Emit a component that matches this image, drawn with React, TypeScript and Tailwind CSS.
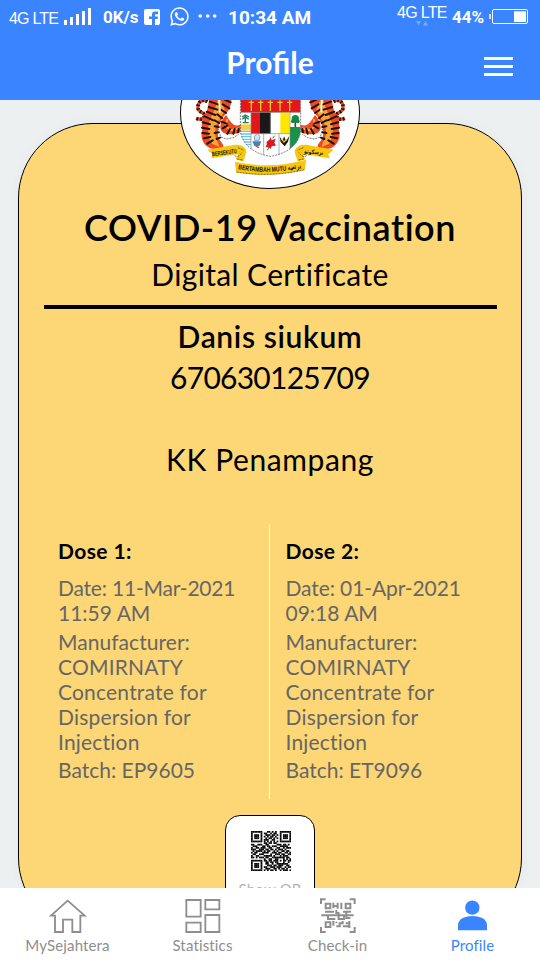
import type { ReactNode } from "react";
import { FaWhatsapp } from "react-icons/fa";

const QR_ROWS = [
  "1111111000110101001111111",
  "1000001011001011001000001",
  "1011101001110110101011101",
  "1011101010101101001011101",
  "1011101001011010101011101",
  "1000001011100110001000001",
  "1111111010101010101111111",
  "0000000011011011000000000",
  "1100111001100000111011010",
  "0111000110110111001111100",
  "1001101110011000110010111",
  "1110011101101101011101000",
  "0101111010110010100110110",
  "1011000111100111011001101",
  "0110011100001001110110011",
  "1001100011111010001011100",
  "1101011101100111111110110",
  "0000000010011001100010101",
  "1111111011011011101011011",
  "1000001001101101100010010",
  "1011101001100100111111100",
  "1011101000111011011100110",
  "1011101011001110111001011",
  "1000001001110011010110100",
  "1111111010101101001011101",
];

function QrCode() {
  return (
    <svg className="ml-px h-10 w-10" viewBox="0 0 25 25">
      {QR_ROWS.map((row, y) =>
        [...row].map((cell, x) =>
          cell === "1" ? <rect key={`${x}-${y}`} x={x} y={y} width="1.08" height="1.08" fill="#000" /> : null,
        ),
      )}
    </svg>
  );
}

function Tiger() {
  return (
    <g>
      <path d="M112 20C96 10 82 22 84 40C86 54 102 50 103 60C103 72 92 76 78 70" fill="none" stroke="#ee4a22" strokeWidth="10" />
      <path d="M112 20C96 10 82 22 84 40C86 54 102 50 103 60C103 72 92 76 78 70" fill="none" stroke="#2a1410" strokeWidth="11" strokeDasharray="5 6" />
      <path d="M118 0H184C186 30 178 48 162 62C152 74 146 88 144 104C140 124 148 134 156 144C164 154 160 166 148 166L120 160C98 148 90 128 97 104C92 90 98 74 106 58C114 44 116 26 118 0Z" fill="#ec4a22" />
      <path d="M146 0C142 34 128 52 120 76C112 98 112 126 126 146L148 156L144 142C134 128 132 106 140 88C146 74 158 60 164 44Z" fill="#f9a533" />
      <path d="M168 60C156 74 148 90 152 104C160 120 186 122 212 112L214 88C198 96 188 90 180 78Z" fill="#ec4a22" />
      <path d="M172 72L168 92L182 106L208 100" fill="none" stroke="#f9a533" strokeWidth="6" />
      <path d="M120 20L144 28M116 36L142 44M110 50L136 60M104 64L130 76M98 82L120 88M96 98L118 102M97 114L117 116M102 130L121 126M112 146L128 136M164 14L182 22M158 28L178 40M150 42L168 54M142 58L156 70M134 76L148 84M134 94L146 96M134 114L146 112M140 132L150 128M154 80L170 86M158 100L172 92M172 116L180 102M190 116L194 102M204 112L206 102" fill="none" stroke="#1d100e" strokeWidth="6" strokeLinecap="round" />
      <path d="M148 10C144 28 154 38 148 52" fill="none" stroke="#fff" strokeWidth="5" />
      <path d="M142 92L148 112L152 126L170 132L190 128L206 118" fill="none" stroke="#333" strokeWidth="2" strokeDasharray="6 3" />
    </g>
  );
}

function CoatOfArms() {
  return (
    <svg className="block h-full w-full" viewBox="33 -174 534 453">
      <defs>
        <clipPath id="shield">
          <path d="M211 -60V104C214 148 250 176 301 184C352 176 389 148 392 104V-60Z" />
        </clipPath>
        <path id="motto" d="M204 222Q301 242 400 216" />
        <path id="unity" d="M127 184L202 174" />
        <path id="jawi" d="M402 175L476 180" />
      </defs>
      <Tiger />
      <g transform="translate(603 0) scale(-1 1)">
        <Tiger />
      </g>
      <g clipPath="url(#shield)">
        <rect x="211" y="-60" width="182" height="250" fill="#fff" />
        <rect x="211" y="-60" width="182" height="112" fill="#e2171c" />
        {[244, 272, 301, 330, 359].map((x) => (
          <path key={x} d={`M${x - 8} 22H${x + 8}M${x} 16V48`} stroke="#f5c51d" strokeWidth="4" />
        ))}
        <rect x="243" y="52" width="28" height="64" fill="#e2171c" />
        <rect x="270" y="52" width="32" height="64" fill="#1c1718" />
        <rect x="331" y="52" width="28" height="64" fill="#ffe600" />
        <path d="M226 82V64M216 66L226 60L237 66M217 73L226 65L236 73M218 83H236" fill="none" stroke="#16845b" strokeWidth="4" />
        <rect x="211" y="88" width="32" height="18" fill="#ffcd3c" />
        <path d="M211 109H243M211 117H243M211 125H243M211 133H243M211 141H243M211 149H243" stroke="#6cc5ec" strokeWidth="4" />
        <path d="M376 96V76" stroke="#604023" strokeWidth="5" />
        <circle cx="376" cy="71" r="11" fill="#118b42" />
        <circle cx="369" cy="79" r="6" fill="#118b42" />
        <circle cx="383" cy="79" r="6" fill="#118b42" />
        <path d="M360 96H393V180H360Z" fill="#159447" />
        <path d="M243 52V170M360 52V170M281 116V182M327 116V182M211 52H393M243 116H360M301 52V116" fill="none" stroke="#888" strokeWidth="2" />
        <path d="M253 124L262 115L270 125L267 136H254Z" fill="#cde6f5" stroke="#587796" strokeWidth="2" />
        <path d="M247 139H274L268 153H253Z" fill="#3e83bf" />
        <path d="M257 153L267 158" stroke="#e34233" strokeWidth="4" />
        <path d="M290 140L298 134L302 126L305 136L317 131L313 143L318 152L306 153L301 162L295 156L287 157L290 149Z" fill="#dd1826" />
        <path d="M308 130L314 122M300 151L292 166" stroke="#27743e" strokeWidth="3" />
        <path d="M329 125L338 138L342 124L348 138L358 123L354 140L344 154L332 141Z" fill="#171717" />
        <path d="M334 131L342 141L351 132" fill="none" stroke="#efc322" strokeWidth="4" />
      </g>
      <path d="M211 15V104C214 148 250 176 301 184C352 176 389 148 392 104V15" fill="none" stroke="#666" strokeWidth="2.500" strokeDasharray="6 3" />
      <g fill="#f6c70c">
        <path d="M112 164L190 150C218 146 234 162 227 178L220 200L196 192C203 186 207 181 200 178L124 190L128 178Z" />
        <path d="M491 164L413 150C385 146 369 162 376 178L383 200L407 192C400 186 396 181 403 178L479 190L475 178Z" />
        <path d="M195 200Q301 224 408 194L405 224Q301 250 198 232Z" />
      </g>
      <path d="M194 182Q206 190 216 172M204 158L222 166M410 182Q397 190 387 172M400 158L382 166M202 192L219 195M401 192L384 195M200 231Q301 248 404 224" fill="none" stroke="#61400f" strokeWidth="2.500" strokeDasharray="6 3" />
      <g fontFamily="'Liberation Sans', sans-serif" fontWeight="700" fill="#17120a">
        <text fontSize="20">
          <textPath href="#motto" textLength="192" lengthAdjust="spacingAndGlyphs">BERTAMBAH MUTU برتمبه</textPath>
        </text>
        <text fontSize="19">
          <textPath href="#unity" textLength="74" lengthAdjust="spacingAndGlyphs">BERSEKUTU</textPath>
        </text>
        <text fontSize="18" fontFamily="'DejaVu Sans', sans-serif">
          <textPath href="#jawi" textLength="58" lengthAdjust="spacingAndGlyphs">برسكوتو</textPath>
        </text>
      </g>
    </svg>
  );
}

function StatusBar() {
  return (
    <div className="flex h-9 items-start whitespace-nowrap font-['Roboto',sans-serif] font-bold">
      <span className="mt-[11px] ml-[9px] w-[55px] font-['Liberation_Sans',sans-serif] text-[16px] leading-4 font-normal tracking-[-0.8px]">4G LTE</span>
      <svg className="mt-2 h-[17px] w-[27px]" viewBox="0 0 27 17" fill="currentColor">
        <path d="M0 12h3v5H0zM6 9h3v8H6zM12 6h3v11h-3zM18 3h3v14h-3zM24 0h3v17h-3z" />
      </svg>
      <span className="mt-[7px] ml-3 w-[41px] text-[17px] leading-5">0K/s</span>
      <svg className="mt-[9px] h-4 w-4" viewBox="0 0 16 16">
        <rect width="16" height="16" rx="2" fill="#fff" />
        <path d="M8 16V10H5V7.4H8V5.6C8 3.7 9.2 2.6 11 2.6H14V5.2H12C11.2 5.2 11 5.6 11 6.2V7.4H14L13.6 10H11V16Z" fill="#3a84ff" />
      </svg>
      <FaWhatsapp className="mt-[6px] ml-[9px] h-[21px] w-[21px]" />
      <svg className="mt-[14px] ml-2 h-1 w-[19px]" viewBox="0 0 19 4" fill="currentColor">
        <circle cx="2.2" cy="2" r="1.8" />
        <circle cx="9.7" cy="2" r="1.8" />
        <circle cx="16.7" cy="2" r="1.8" />
      </svg>
      <span className="mt-[8px] ml-[11px] w-[169px] text-[19px] leading-5">10:34 AM</span>
      <span className="flex w-[55px] flex-col">
        <span className="mt-[5px] font-['Liberation_Sans',sans-serif] text-[16px] leading-4 font-normal tracking-[-0.7px]">4G LTE</span>
        <svg className="ml-[19px] h-[5px] w-3" viewBox="0 0 12 5" fill="#76aaff">
          <path d="M0 0h5L2.500 4.500zM7 4.500h5L9.500 0z" />
        </svg>
      </span>
      <span className="mt-[7px] w-[37px] text-[17px] leading-5">44%</span>
      <svg className="mt-[9px] h-[15px] w-[39px]" viewBox="0 0 39 15">
        <path d="M1 5v5" stroke="#fff" strokeWidth="1.500" />
        <rect x="3.500" y="0.500" width="35" height="14" rx="1.500" fill="none" stroke="#fff" />
        <rect x="25" y="2.300" width="12" height="10.700" fill="#fff" />
      </svg>
    </div>
  );
}

function Header() {
  return (
    <header className="relative z-10 h-[100px] shrink-0 bg-[#3a84ff] text-white">
      <StatusBar />
      <div className="grid grid-cols-[1fr_auto_1fr] items-start pt-2">
        <span />
        <h1 className="text-[30px] leading-9 font-bold">Profile</h1>
        <div className="mt-[13px] mr-[27px] flex flex-col gap-[5px] justify-self-end">
          <span className="h-[3px] w-[29px] bg-white" />
          <span className="h-[3px] w-[29px] bg-white" />
          <span className="h-[3px] w-[29px] bg-white" />
        </div>
      </div>
    </header>
  );
}

function Dose({ title, date, time, batch, dateClass }: { title: string; date: string; time: string; batch: string; dateClass: string }) {
  return (
    <div className="pt-3.5 text-[21px] leading-[25px] tracking-[0.2px] whitespace-nowrap text-[#666]">
      <h3 className="font-bold tracking-[0.4px] text-black">{title}</h3>
      <p className={`mt-3 ${dateClass}`}>{date}</p>
      <p className="tracking-[0px]">{time}</p>
      <p className="mt-1">
        <span className="tracking-[0.05px]">Manufacturer:</span>
        <br />
        COMIRNATY
        <br />
        Concentrate for
        <br />
        Dispersion for
        <br />
        Injection
      </p>
      <p className="mt-[3px] tracking-[0px]">{batch}</p>
    </div>
  );
}

function Certificate() {
  return (
    <section className="mx-[18px] mt-[23px] flex h-[810px] flex-col items-center rounded-[75px] border border-black bg-[#fdd775] pt-[81px] text-black shadow-[0_0_12px_rgba(0,0,0,0.04)]">
      <h2 className="text-[36px] leading-[44px] font-semibold tracking-[0.55px] whitespace-nowrap">COVID-19 Vaccination</h2>
      <p className="mt-[5px] text-[30px] leading-10 tracking-[0.35px]">Digital Certificate</p>
      <div className="mt-[11px] h-1 w-[453px] bg-black" />
      <p className="mt-[7px] text-[30px] leading-[41px] font-semibold tracking-[0.65px]">Danis siukum</p>
      <p className="text-[30px] leading-[41px] tracking-[-0.75px]">670630125709</p>
      <p className="mt-[41px] text-[30px] leading-10 tracking-[0.6px]">KK Penampang</p>
      <div className="mt-[45px] flex h-[275px] w-full shrink-0">
        <div className="w-[251px] border-r border-[#fffbe8] pl-[39px]">
          <Dose title="Dose 1:" date="Date: 11-Mar-2021" time="11:59 AM" batch="Batch: EP9605" dateClass="tracking-[-0.2px]" />
        </div>
        <div className="pl-[15.500px]">
          <Dose title="Dose 2:" date="Date: 01-Apr-2021" time="09:18 AM" batch="Batch: ET9096" dateClass="tracking-[-0.1px]" />
        </div>
      </div>
      <div className="mt-4 flex h-[96px] w-[90px] shrink-0 flex-col items-center rounded-[15px] border border-black bg-white pt-[15px]">
        <QrCode />
        <span className="mt-[8px] text-[15px] leading-5 tracking-[0.2px] text-[#b4b4b4]">Show QR</span>
      </div>
    </section>
  );
}

function NavItem({ label, active, children }: { label: string; active?: boolean; children: ReactNode }) {
  return (
    <div className={`flex flex-col items-center pt-2.5 ${active ? "text-[#3a84ff]" : "text-[#8e8e8e]"}`}>
      {children}
      <span className="mt-px text-[15px] leading-5 tracking-[0.15px]">{label}</span>
    </div>
  );
}

function BottomNav() {
  return (
    <nav className="relative z-10 grid h-[72px] shrink-0 grid-cols-4 bg-white">
      <NavItem label="MySejahtera">
        <svg className="h-9 w-[38px]" viewBox="147 54 114 108" fill="none" stroke="currentColor" strokeWidth="5.500">
          <path d="M203 62L153 107H165V156H189V119H217V156H241V107H254Z" />
        </svg>
      </NavItem>
      <NavItem label="Statistics">
        <svg className="h-9 w-[38px]" viewBox="552 54 114 108" fill="none" stroke="currentColor" strokeWidth="5.500">
          <path d="M559 60H602V110H559ZM616 60H658V88H616ZM559 128H602V156H559ZM616 105H658V156H616Z" />
        </svg>
      </NavItem>
      <NavItem label="Check-in">
        <svg className="h-9 w-[38px]" viewBox="147 54 114 108" fill="none" stroke="currentColor" strokeWidth="6">
          <path d="M153 72V58H167M239 58H254V72M153 141V156H167M239 156H254V141" />
          <path d="M167 71H181V85H167ZM227 71H241V85H227ZM167 127H181V141H167Z" />
          <path d="M190 68V85M190 78H203M203 68V86M214 68V88M165 95H192M199 90V99H207M219 95H243M154 106H251M174 106V117H196M206 97V117H222V106M229 97V114H241M190 123V137M199 125V130M199 139H209V130H218V123M219 139H238M227 130H238V123M238 130V144" />
        </svg>
      </NavItem>
      <NavItem label="Profile" active>
        <svg className="h-9 w-[38px]" viewBox="552 54 114 108" fill="currentColor">
          <circle cx="607" cy="83" r="21.500" />
          <path d="M564 151V135C564 116 588 108 607.500 108S651 116 651 135V151Z" />
        </svg>
      </NavItem>
    </nav>
  );
}

export default function App() {
  return (
    <div className="flex h-[960px] w-[540px] flex-col overflow-hidden bg-[#ecf0f1] font-['Lato',sans-serif]">
      <Header />
      <main className="relative min-h-0 flex-1 overflow-hidden">
        <Certificate />
        <div className="absolute -top-16 left-[180px] h-[153px] w-[180px] overflow-hidden rounded-[50%] border border-black bg-white">
          <CoatOfArms />
        </div>
      </main>
      <BottomNav />
    </div>
  );
}
